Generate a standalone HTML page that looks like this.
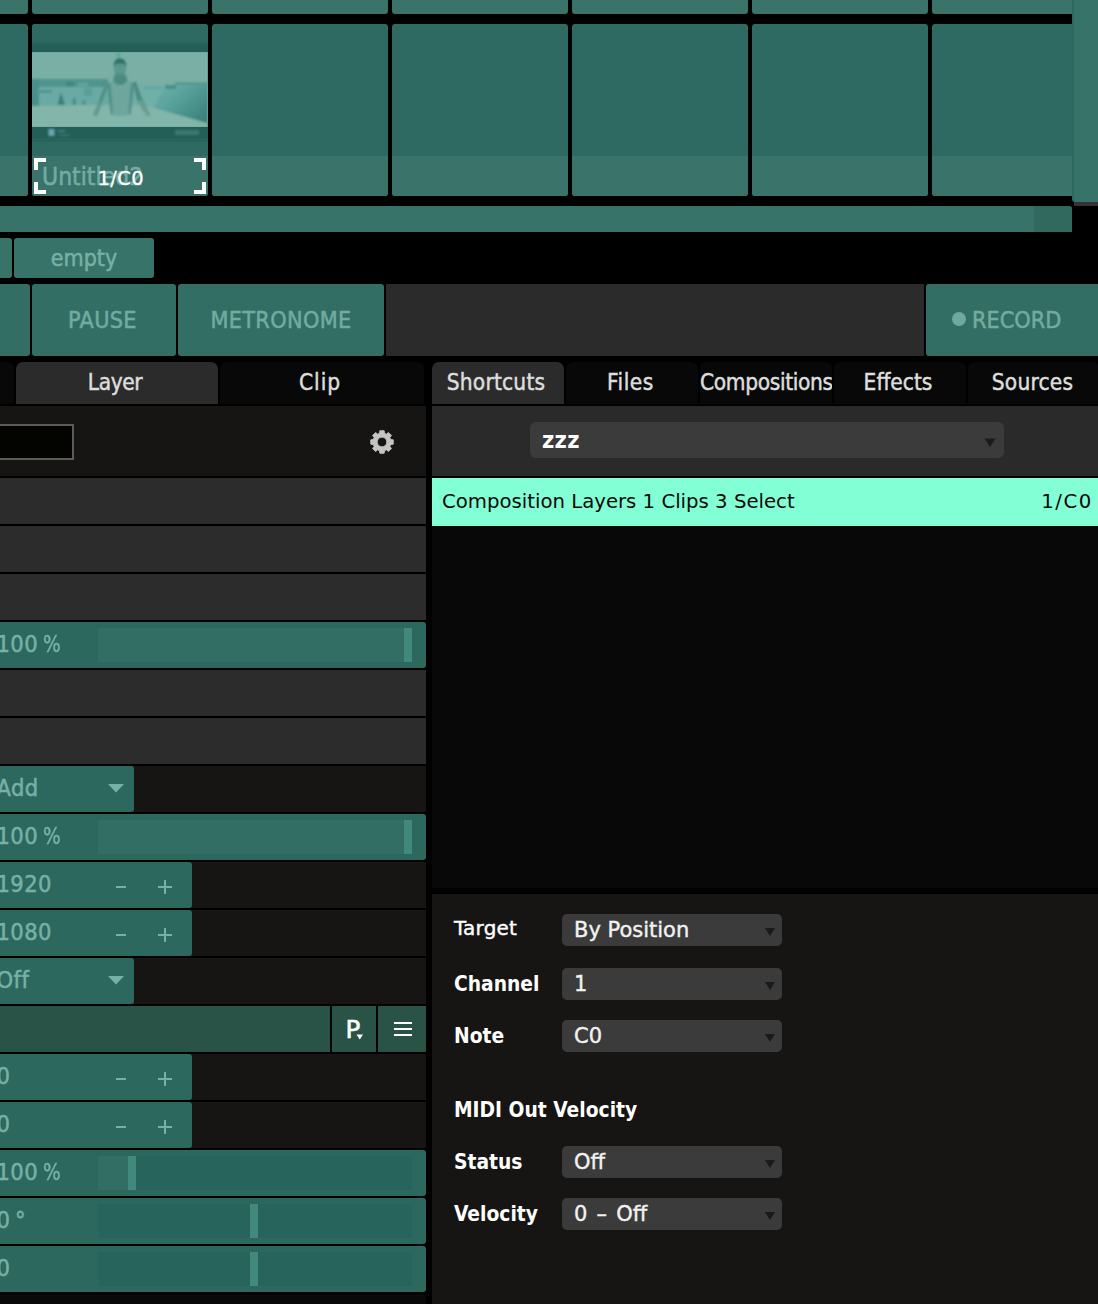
<!DOCTYPE html>
<html><head><meta charset="utf-8"><title>MIDI Shortcuts</title>
<style>
html,body{margin:0;padding:0;background:#000;}
body{width:1098px;height:1304px;overflow:hidden;position:relative;font-family:"DejaVu Sans Condensed","DejaVu Sans","Liberation Sans",sans-serif;}
.a{position:absolute;box-sizing:border-box;}
.t1{background:#3a736a;}
.t2{background:#2e6a61;}
.tx{color:#77b0a5;font-size:22.8px;white-space:pre;line-height:1;-webkit-text-stroke:0.5px #77b0a5;}
.btn{top:284px;height:72px;background:#336e65;border-radius:3px;text-align:center;line-height:72px;font-size:23.2px;letter-spacing:0.35px;color:#72ab9f;-webkit-text-stroke:0.5px #72ab9f;}
.g{background:#2c2c2c;}
.row{left:0;width:426px;height:46px;}
.teal{background:#2d685f;border-radius:0 3px 3px 0;}
.trk{left:98px;top:6px;width:314px;height:34px;background:#27645b;}
.fill{left:0;top:0;height:34px;background:#336e64;}
.hd{top:0;width:8px;height:34px;background:#41897b;}
.lbl{left:-3.600px;top:11px;font-size:23.5px;letter-spacing:0.45px;word-spacing:-2.5px;}
.tab{top:362px;height:42px;border-radius:7px 7px 0 0;background:#080808;color:#dedede;font-size:22.5px;text-align:center;line-height:40px;white-space:pre;-webkit-text-stroke:0.45px #dedede;overflow:hidden;}
.tab.on{background:#2b2b2b;}
.dd{left:562px;width:220px;height:32px;background:#3b3b3b;border-radius:5px;color:#f2f2f2;font-family:"DejaVu Sans","Liberation Sans",sans-serif;font-size:21px;line-height:32px;padding-left:12px;white-space:pre;-webkit-text-stroke:0.4px #f2f2f2;}
.dd:after{content:"";position:absolute;right:7px;top:14px;border-left:5px solid transparent;border-right:5px solid transparent;border-top:8px solid #1a1a1a;}
.bl{left:454px;color:#fff;font-weight:bold;font-size:20.8px;line-height:1;white-space:pre;}
.lg{font-family:"DejaVu Sans","Liberation Sans",sans-serif;}
</style></head><body>
<div id="grid">
<div class="a t1" style="left:-4px;top:-4px;width:32px;height:18px;border-radius:3px"></div>
<div class="a t2" style="left:-4px;top:24px;width:32px;height:172px;border-radius:3px;overflow:hidden"><div class="a t1" style="left:0;top:132px;width:32px;height:40px"></div></div>
<div class="a t1" style="left:32px;top:-4px;width:176px;height:18px;border-radius:3px"></div>
<div class="a t2" style="left:32px;top:24px;width:176px;height:172px;border-radius:3px;overflow:hidden"><div class="a t1" style="left:0;top:132px;width:176px;height:40px"></div></div>
<div class="a t1" style="left:212px;top:-4px;width:176px;height:18px;border-radius:3px"></div>
<div class="a t2" style="left:212px;top:24px;width:176px;height:172px;border-radius:3px;overflow:hidden"><div class="a t1" style="left:0;top:132px;width:176px;height:40px"></div></div>
<div class="a t1" style="left:392px;top:-4px;width:176px;height:18px;border-radius:3px"></div>
<div class="a t2" style="left:392px;top:24px;width:176px;height:172px;border-radius:3px;overflow:hidden"><div class="a t1" style="left:0;top:132px;width:176px;height:40px"></div></div>
<div class="a t1" style="left:572px;top:-4px;width:176px;height:18px;border-radius:3px"></div>
<div class="a t2" style="left:572px;top:24px;width:176px;height:172px;border-radius:3px;overflow:hidden"><div class="a t1" style="left:0;top:132px;width:176px;height:40px"></div></div>
<div class="a t1" style="left:752px;top:-4px;width:176px;height:18px;border-radius:3px"></div>
<div class="a t2" style="left:752px;top:24px;width:176px;height:172px;border-radius:3px;overflow:hidden"><div class="a t1" style="left:0;top:132px;width:176px;height:40px"></div></div>
<div class="a t1" style="left:932px;top:-4px;width:144px;height:18px;border-radius:3px"></div>
<div class="a t2" style="left:932px;top:24px;width:144px;height:172px;border-radius:3px;overflow:hidden"><div class="a t1" style="left:0;top:132px;width:144px;height:40px"></div></div>
<!-- thumbnail -->
<div class="a" id="thumb" style="left:32px;top:24px;width:176px;height:132px;overflow:hidden;border-radius:3px 3px 0 0">
<svg width="176" height="132" viewBox="0 0 176 132">
<defs>
<filter id="b1" x="-20%" y="-20%" width="140%" height="140%"><feGaussianBlur stdDeviation="1"/></filter>
<filter id="b2" x="-20%" y="-20%" width="140%" height="140%"><feGaussianBlur stdDeviation="0.85"/></filter>
<filter id="b3" x="-20%" y="-20%" width="140%" height="140%"><feGaussianBlur stdDeviation="1.8"/></filter>
<linearGradient id="tg" x1="0" y1="0" x2="0" y2="1"><stop offset="0" stop-color="#2e6a61"/><stop offset="1" stop-color="#245f57"/></linearGradient>
<linearGradient id="wv" x1="0" y1="0" x2="1" y2="0.800"><stop offset="0" stop-color="#6fb0a8"/><stop offset="0.4" stop-color="#5aa39d"/><stop offset="1" stop-color="#3a827c"/></linearGradient>
<clipPath id="ic"><rect x="0" y="28.500" width="175" height="74"/></clipPath>
</defs>
<rect x="0" y="0" width="176" height="132" fill="#2e6a61"/>
<rect x="0" y="16" width="176" height="6" fill="url(#tg)"/>
<rect x="0" y="22" width="176" height="92" fill="#245f57"/>
<rect x="0" y="114" width="176" height="4" fill="#29645b"/>
<rect x="0" y="28" width="176" height="75" fill="#639e94"/>
<g clip-path="url(#ic)">
<rect x="0" y="28" width="176" height="76" fill="#7aafa5"/>
<g filter="url(#b1)">
<rect x="-4" y="62" width="82" height="20" fill="#69aba4"/>
<rect x="-4" y="55" width="80" height="8" fill="#4f948e"/>
<rect x="-4" y="55" width="11" height="28" fill="#4a908a"/>
<rect x="4" y="66" width="16" height="3" fill="#4f948e"/>
<rect x="34" y="58" width="8" height="4" fill="#3f857f"/>
<rect x="46" y="59" width="10" height="3" fill="#62a59e"/>
<rect x="52" y="64" width="8" height="8" fill="#5a9f98"/>
<path d="M25.500 81 L28.500 69.500 L29.500 69.500 L33 81Z" fill="#3a807a"/>
<rect x="40.500" y="74" width="3.500" height="7" fill="#4a8f89"/>
<rect x="50" y="76" width="3.500" height="5" fill="#4f948e"/>
<path d="M108 61 L134 61 L176 61 L176 100 L113 82 L100 82 L100 61Z" fill="#6fb0a8"/>
<path d="M133 62 L176 61 L176 99.500 L122 84 Q128 70 133 62Z" fill="url(#wv)"/>
<rect x="143" y="58.500" width="36" height="2.500" fill="#4f958f"/>
<rect x="133" y="61" width="11" height="4" fill="#4a908a"/>
<rect x="112" y="63" width="18" height="2" fill="#5fa39c"/>
<path d="M-4 82 L76 81 L113 81.500 L180 100.500 L180 108 L-4 108Z" fill="#82b6ab"/>
<rect x="85" y="26" width="3" height="11" fill="#5fa5a0"/>
</g>
<g filter="url(#b2)">
<path d="M74 58 L77 59.500 L71 76 L64.500 93 L61 92 L67.500 75Z" fill="#4f8f87"/>
<path d="M101 58.500 L104 57.500 L109 72 L118.500 91.500 L115.500 93.500 L105 76Z" fill="#4a8a82"/>
<path d="M106 77 L109.500 75.500 L118.500 91.500 L115.500 93.500Z" fill="#6a9f92"/>
<path d="M67 78 L70.500 79 L64.500 93 L61 92Z" fill="#639a8d"/>
<ellipse cx="62" cy="93.500" rx="3.200" ry="2" fill="#84b3a3"/>
<ellipse cx="117.500" cy="93.500" rx="3.200" ry="2" fill="#84b3a3"/>
<path d="M75.500 58.500 Q88 53 102 58.500 L101 72 L98.500 90.500 Q88 93.500 79 90.500 L76.500 72Z" fill="#6ea69d"/>
<path d="M75.500 58.500 L78.500 59.500 L81 90 L79 90.500 L76.500 72Z M102 58.500 L99 59.500 L96.500 90 L98.500 90.500 L101 72Z" fill="#4f8f88"/>
<path d="M81 56.500 Q88 66 95.500 56.500 L94 51 L82.500 51Z" fill="#4a8a82"/>
<ellipse cx="88" cy="44.500" rx="6.200" ry="8.500" fill="#5a978d"/>
<path d="M81.500 43.500 Q81.500 34.500 88 34.500 Q94.500 34.500 94.500 43.500 Q93.500 39 88 39.500 Q82.500 39 81.500 43.500Z" fill="#2f6f68"/>
<path d="M83 49 Q88 56.500 93 49 Q88 52 83 49Z" fill="#4a8a82"/>
</g>
</g>
<g filter="url(#b2)">
<rect x="16.500" y="105" width="6" height="7" fill="#6fa3b3"/>
<rect x="26" y="106" width="7" height="2" fill="#3f7f86"/>
<rect x="27" y="110" width="10" height="2" fill="#34747a"/>
<rect x="143" y="106" width="24" height="5" fill="#3b776e"/>
</g>
</svg>
</div>

<!-- clip label -->
<div class="a tx" style="left:42px;top:165px;font-size:24.5px;color:#72aba1">Untitled2</div>
<div class="a lg" style="left:97.500px;top:168.500px;color:#fff;font-size:19.5px;letter-spacing:0.4px;line-height:1;white-space:pre;-webkit-text-stroke:0.3px #fff">1/C0</div>
<svg class="a" style="left:32px;top:156px" width="176" height="40" viewBox="0 0 176 40"><path d="M14 4H4V14 M4 26V36H14 M162 4H172V14 M172 26V36H162" fill="none" stroke="#fff" stroke-width="4"/></svg>
<!-- right scrollbar -->
<div class="a" style="left:1072px;top:-4px;width:30px;height:206px;background:#38736a;border-left:2px solid #2e695f;border-radius:0 0 0 3px"></div>
<div class="a" style="left:1074px;top:202px;width:24px;height:4px;background:#343434"></div>
<!-- horizontal strip -->
<div class="a" style="left:-4px;top:206px;width:1076px;height:26px;background:#38736a;border-radius:0 3px 0 0;overflow:hidden"><div class="a" style="left:1038px;top:0;width:38px;height:26px;background:#31695f"></div></div>
<!-- empty tabs -->
<div class="a" style="left:-4px;top:238px;width:16px;height:40px;background:#38736a;border-radius:3px"></div>
<div class="a tx" style="left:14px;top:238px;width:140px;height:40px;background:#38736a;border-radius:3px;text-align:center;line-height:40px;font-size:23px">empty</div>
<!-- transport -->
<div class="a btn" style="left:-4px;width:34px"></div>
<div class="a btn" style="left:32px;width:144px;padding-right:3px">PAUSE</div>
<div class="a btn" style="left:178px;width:206px">METRONOME</div>
<div class="a" style="left:386px;top:284px;width:538px;height:72px;background:#2b2b2b"></div>
<div class="a btn" style="left:926px;width:180px;text-align:left;padding-left:46px;letter-spacing:0">RECORD</div>
<div class="a" style="left:952px;top:312px;width:14px;height:14px;border-radius:7px;background:#6fa99e"></div>
</div>
<div id="left">
<div class="a tab" style="left:-10px;width:24px"></div>
<div class="a tab on" style="left:16px;width:202px;letter-spacing:-0.4px;padding-right:4px">Layer</div>
<div class="a tab" style="left:220px;width:204px;letter-spacing:1px;padding-right:4px">Clip</div>
<div class="a" style="left:0;top:406px;width:426px;height:898px;background:#161513"></div>
<div class="a" style="left:0;top:476px;width:426px;height:818px;background:#000"></div>
<div class="a" style="left:0;top:1294px;width:426px;height:10px;background:#090909"></div>
<div class="a" style="left:-4px;top:424px;width:78px;height:36px;background:#030300;border:2px solid #5b5b5b"></div>
<svg class="a" style="left:368px;top:428.200px" width="28" height="28" viewBox="-14 -14 28 28"><path d="M-2.15 -11.19 L2.15 -11.19 L2.40 -8.67 L4.44 -7.83 L6.39 -9.44 L9.44 -6.39 L7.83 -4.44 L8.67 -2.40 L11.19 -2.15 L11.19 2.15 L8.67 2.40 L7.83 4.44 L9.44 6.39 L6.39 9.44 L4.44 7.83 L2.40 8.67 L2.15 11.19 L-2.15 11.19 L-2.40 8.67 L-4.44 7.83 L-6.39 9.44 L-9.44 6.39 L-7.83 4.44 L-8.67 2.40 L-11.19 2.15 L-11.19 -2.15 L-8.67 -2.40 L-7.83 -4.44 L-9.44 -6.39 L-6.39 -9.44 L-4.44 -7.83 L-2.40 -8.67Z M4.900 0A4.900 4.900 0 1 0 -4.900 0A4.900 4.900 0 1 0 4.900 0Z" fill="#c4c4c4" fill-rule="evenodd" stroke="#c4c4c4" stroke-width="1" stroke-linejoin="round"/></svg>
<div class="a row g" style="top:478px"></div>
<div class="a row g" style="top:526px"></div>
<div class="a row g" style="top:574px"></div>
<div class="a row teal" style="top:622px"><div class="a tx lbl">100 <span style="display:inline-block;transform:scaleX(0.88);transform-origin:0 50%">%</span></div><div class="a trk"><div class="a fill" style="width:306px"></div><div class="a hd" style="left:306px"></div></div></div>
<div class="a row g" style="top:670px"></div>
<div class="a row g" style="top:718px"></div>
<div class="a row" style="top:766px;background:#161513"></div>
<div class="a teal" style="left:0;top:766px;width:134px;height:46px"><div class="a tx lbl">Add</div><svg class="a" style="left:107px;top:17px" width="18" height="10"><path d="M1 1H17L9 9.500Z" fill="#77b0a5"/></svg></div>
<div class="a row teal" style="top:814px"><div class="a tx lbl">100 <span style="display:inline-block;transform:scaleX(0.88);transform-origin:0 50%">%</span></div><div class="a trk"><div class="a fill" style="width:306px"></div><div class="a hd" style="left:306px"></div></div></div>
<div class="a row" style="top:862px;background:#161513"></div>
<div class="a teal" style="left:0;top:862px;width:192px;height:46px"><div class="a tx lbl">1920</div><div class="a" style="left:116px;top:24px;width:10px;height:2px;background:#77b0a5"></div><div class="a" style="left:158px;top:24px;width:14px;height:2px;background:#77b0a5"></div><div class="a" style="left:164px;top:18px;width:2px;height:14px;background:#77b0a5"></div></div>
<div class="a row" style="top:910px;background:#161513"></div>
<div class="a teal" style="left:0;top:910px;width:192px;height:46px"><div class="a tx lbl">1080</div><div class="a" style="left:116px;top:24px;width:10px;height:2px;background:#77b0a5"></div><div class="a" style="left:158px;top:24px;width:14px;height:2px;background:#77b0a5"></div><div class="a" style="left:164px;top:18px;width:2px;height:14px;background:#77b0a5"></div></div>
<div class="a row" style="top:958px;background:#161513"></div>
<div class="a teal" style="left:0;top:958px;width:134px;height:46px"><div class="a tx lbl">Off</div><svg class="a" style="left:107px;top:17px" width="18" height="10"><path d="M1 1H17L9 9.500Z" fill="#77b0a5"/></svg></div>
<div class="a row" style="top:1006px;background:#295346"><div class="a" style="left:330px;top:0;width:2px;height:46px;background:#000"></div><div class="a" style="left:376px;top:0;width:2px;height:46px;background:#000"></div><div class="a lg" style="left:345.500px;top:11.500px;color:#fff;font-size:24.5px;line-height:1;-webkit-text-stroke:0.6px #fff">P</div><svg class="a" style="left:356px;top:28px" width="8" height="6"><path d="M0.500 0.500H7L3.800 5.500Z" fill="#fff"/></svg><div class="a" style="left:394px;top:16px;width:18px;height:2px;background:#fff"></div><div class="a" style="left:394px;top:22px;width:18px;height:2px;background:#fff"></div><div class="a" style="left:394px;top:28px;width:18px;height:2px;background:#fff"></div></div>
<div class="a row" style="top:1054px;background:#161513"></div>
<div class="a teal" style="left:0;top:1054px;width:192px;height:46px"><div class="a tx lbl">0</div><div class="a" style="left:116px;top:24px;width:10px;height:2px;background:#77b0a5"></div><div class="a" style="left:158px;top:24px;width:14px;height:2px;background:#77b0a5"></div><div class="a" style="left:164px;top:18px;width:2px;height:14px;background:#77b0a5"></div></div>
<div class="a row" style="top:1102px;background:#161513"></div>
<div class="a teal" style="left:0;top:1102px;width:192px;height:46px"><div class="a tx lbl">0</div><div class="a" style="left:116px;top:24px;width:10px;height:2px;background:#77b0a5"></div><div class="a" style="left:158px;top:24px;width:14px;height:2px;background:#77b0a5"></div><div class="a" style="left:164px;top:18px;width:2px;height:14px;background:#77b0a5"></div></div>
<div class="a row teal" style="top:1150px"><div class="a tx lbl">100 <span style="display:inline-block;transform:scaleX(0.88);transform-origin:0 50%">%</span></div><div class="a trk"><div class="a fill" style="width:30px"></div><div class="a hd" style="left:30px"></div></div></div>
<div class="a row teal" style="top:1198px"><div class="a tx lbl">0 °</div><div class="a trk"><div class="a fill" style="width:0px"></div><div class="a hd" style="left:152px"></div></div></div>
<div class="a row teal" style="top:1246px"><div class="a tx lbl">0</div><div class="a trk"><div class="a fill" style="width:0px"></div><div class="a hd" style="left:152px"></div></div></div>
</div>
<div id="right">
<div class="a tab on" style="left:432px;width:132px;letter-spacing:0.2px;padding-right:4px">Shortcuts</div>
<div class="a tab" style="left:566px;width:132px;letter-spacing:0.5px;padding-right:3px">Files</div>
<div class="a tab" style="left:700px;width:132px;letter-spacing:-0.35px;padding-right:1px">Compositions</div>
<div class="a tab" style="left:834px;width:132px;padding-right:4px">Effects</div>
<div class="a tab" style="left:968px;width:132px;letter-spacing:0.2px;padding-right:3px">Sources</div>
<div class="a" style="left:432px;top:406px;width:666px;height:70px;background:#2a2a2a"></div>
<div class="a" style="left:530px;top:422px;width:474px;height:36px;background:#3b3b3b;border-radius:6px;color:#fff;font-weight:bold;font-size:23.5px;line-height:37px;letter-spacing:0.3px;padding-left:12px">zzz</div>
<svg class="a" style="left:984px;top:437.700px" width="12" height="10"><path d="M0.500 0.500H11.500L6 9Z" fill="#1b1b1b"/></svg>
<div class="a lg" style="left:432px;top:478px;width:666px;height:48px;background:#83ffd5;color:#0a0a0a;font-size:19.7px;line-height:48px;padding-left:10px;white-space:pre">Composition Layers 1 Clips 3 Select<span class="a" style="right:5px;top:0;letter-spacing:1.6px">1/C0</span></div>
<div class="a" style="left:432px;top:526px;width:666px;height:362px;background:#080808"></div>
<div class="a" style="left:432px;top:894px;width:666px;height:410px;background:#161513"></div>
<div class="a bl lg" style="font-weight:normal;font-size:20px;letter-spacing:0.2px;-webkit-text-stroke:0.4px #fff;top:918px">Target</div><div class="a dd" style="top:914px">By Position</div>
<div class="a bl" style="top:974px">Channel</div><div class="a dd" style="top:968px">1</div>
<div class="a bl" style="top:1026px">Note</div><div class="a dd" style="top:1020px">C0</div>
<div class="a bl" style="top:1152px">Status</div><div class="a dd" style="top:1146px">Off</div>
<div class="a bl" style="top:1204px">Velocity</div><div class="a dd" style="top:1198px;word-spacing:2.5px">0 – Off</div>
<div class="a bl" style="top:1100px">MIDI Out Velocity</div>
</div>
</body></html>
